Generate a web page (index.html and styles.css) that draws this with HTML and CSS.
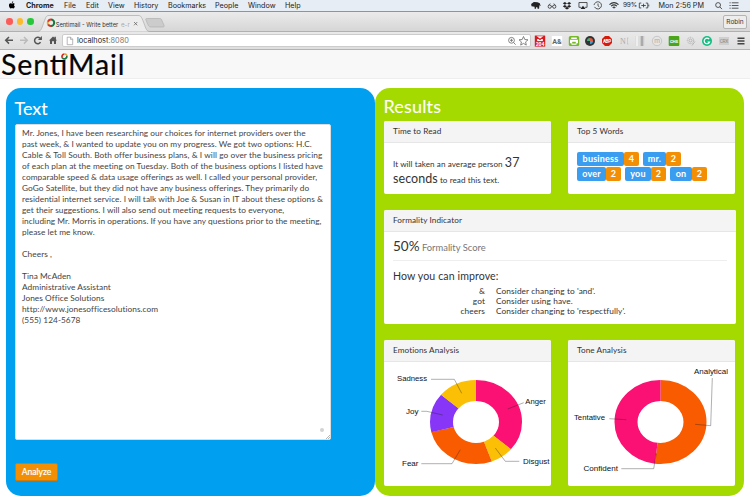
FILE: index.html
```
<!DOCTYPE html>
<html lang="en">
<head>
<meta charset="utf-8">
<title>Sentimail - Write better e-mails</title>
<link rel="stylesheet" href="styles.css">
</head>
<body>
<header class="menubar">
  <svg class="apple" viewBox="0 0 10 10"><path d="M7.600 5.200c0-1 .8-1.500.8-1.500C7.700 2.700 6.700 2.700 6.500 2.700c-.7 0-1.100.4-1.600.4S4 2.700 3.400 2.700C2 2.700 1.200 3.900 1.200 5.300c0 2 1.300 4 2.300 4 .6 0 .8-.4 1.500-.4s.9.4 1.500.4c1 0 1.900-2 2.100-2.500-.7-.3-1-.9-1-1.600zM6.500.3C5.500.5 4.800 1.300 4.900 2.400 5.900 2.300 6.600 1.400 6.500.3z"/></svg>
  <b>Chrome</b><span>File</span><span>Edit</span><span>View</span><span>History</span><span>Bookmarks</span><span>People</span><span>Window</span><span>Help</span>
  <div class="status">
    <svg viewBox="0 0 12 10"><path d="M.6 3.200l3-2 4 .2 2.600 1.200.9 2.700-.6.300-.6-1.400-.5 4.500H7.800L7.500 7H6v1.700H4.500L4.400 6.500 1 5.800z"/></svg>
    <svg viewBox="0 0 12 10" class="line"><circle cx="3.500" cy="6.300" r="1.800"/><circle cx="8.500" cy="6.300" r="1.800"/><path d="M2 5l2-2.200M10 5L8 2.800M5.300 6h1.400"/></svg>
    <svg viewBox="0 0 12 10"><path d="M3.700 1L1.300 2.600 3.600 4.300 6 2.700zM8.300 1l2.400 1.600-2.300 1.700L6 2.700zM1.300 5.800l2.400 1.600L6 5.800 3.600 4.400zM10.700 5.800L8.300 7.400 6 5.800l2.400-1.400zM3.700 8L6 6.400 8.300 8 6 9.500z"/></svg>
    <svg viewBox="0 0 12 10" class="line"><path d="M4 7H1.500V1.700h9V7H8"/><path class="solid" d="M6 5.400L8.800 9H3.200z"/></svg>
    <svg viewBox="0 0 12 10" class="line"><path d="M2.200 6.500A4 4 0 1 0 2.300 3L1.500 4.500M6 2.800V5.300L7.500 6.500"/></svg>
    <svg viewBox="0 0 12 10" class="line thick"><path d="M1 4Q6-.5 11 4M2.800 5.700Q6 2.800 9.200 5.700M4.500 7.400Q6 6 7.500 7.400"/><circle class="solid" cx="6" cy="8.500" r=".5"/></svg>
    <span>99%</span>
    <svg viewBox="0 0 12 10" class="line"><path d="M3 2.300H.8v5.400H3M8 2.300h2.200v5.400H8M11.300 4v2M3 5h5M5.500 3v4"/></svg>
    <span class="clock">Mon 2:56 PM</span>
    <svg viewBox="0 0 12 10" class="line"><circle cx="5" cy="4.500" r="2.700"/><path d="M7 6.600l2.300 2.400"/></svg>
    <svg viewBox="0 0 12 10" class="line"><path d="M3.500 2h7.500M3.500 5H11M3.500 8H11M1 2h1.300M1 5h1.300M1 8h1.300"/></svg>
  </div>
</header>
<div class="tabs">
  <i class="light red"></i><i class="light amber"></i><i class="light green"></i>
  <svg class="tabshape" viewBox="0 0 128 19">
    <path d="M0 18.500C3.500 18.300 4 14 6 9S8 2.500 11 2.500h89c3 0 3.500 1.500 5.500 6.500s2.500 9.300 6 9.500V19H0z" fill="#ececec" stroke="#aaa" stroke-width=".7"/>
    <path d="M109.500 5.500h12c2 0 2 1 3.500 4.500s2 4-1 4h-11c-2 0-2.500-1-4-4.500s-2-4 .5-4z" fill="#ccc" stroke="#aaa" stroke-width=".6"/>
    <g fill="none" stroke-width="2" transform="translate(.5 -.5)"><path d="M9.700 12.500A3.200 3.200 0 0 1 9.500 9.300" stroke="#e9a92c"/><path d="M9.500 9.300a3.200 3.200 0 0 1 3-2.200" stroke="#df3428"/><path d="M12.500 7.100a3.200 3.200 0 0 1 0 6.400" stroke="#187840"/><path d="M12.500 13.500a3.200 3.200 0 0 1-2.800-1.500" stroke="#c43427"/></g>
    <text x="17.700" y="13.500" textLength="62.500" lengthAdjust="spacingAndGlyphs">Sentimail - Write better</text><text x="83" y="13.500" fill="#aaa">e-r</text>
    <path d="M96 9l3.300 3.300M99.300 9L96 12.300" stroke="#666" stroke-width=".8"/>
  </svg>
  <span class="profile">Robin</span>
</div>
<div class="toolbar">
  <svg class="nav" viewBox="0 0 62 16"><g fill="none" stroke="#555" stroke-width="1.500"><path d="M13 7.300H6M9 4L5.700 7.300 9 10.600"/><path d="M20 7.300h7M24 4l3.300 3.300L24 10.600" stroke="#bbb"/><path d="M40.500 9.200A3.200 3.200 0 1 1 40 5.200"/></g><path d="M41.900 3v4h-4zM49 7.400L53 3.500l1.500 1.300V3.800h1.400v2.500L57 7.400h-1V11h-2V8.300h-2V11h-2V7.400z" fill="#555"/></svg>
  <div class="address">
    <svg class="page" viewBox="0 0 8 10"><path d="M1.200 1.200h3.500l2 2v5.500H1.200zM4.500 1.200v2.200h2.200" fill="none" stroke="#999" stroke-width=".7"/></svg>
    <span class="url">localhost<em>:8080</em></span>
    <svg class="marks" viewBox="0 0 24 12"><g fill="none" stroke="#777" stroke-width=".9"><circle cx="5.500" cy="5.300" r="2.900"/><path d="M4 5.300h3M5.500 3.800v3M7.600 7.500l2 2.200M17.500 1.500l1.300 3 3.200.3-2.400 2.100.7 3.200-2.800-1.700-2.800 1.700.7-3.200L13 4.800l3.200-.3z"/></g></svg>
  </div>
  <div class="extensions">
    <svg viewBox="0 0 12 12"><path d="M.8.6h10.400v11H.8z" fill="#d71920"/><path d="M2 1.300h8v4.800H2z" fill="#fff"/><path d="M2.500 6V1.800L6 4.500l3.500-2.700V6" fill="none" stroke="#d71920" stroke-width="1.300"/><text x="1.700" y="11.200" font-size="5.200" font-weight="700" fill="#fff" textLength="8.800">204</text></svg>
    <svg viewBox="0 0 12 12"><path d="M.8 1h10.400v10H.8z" fill="#fff"/><text x="1.300" y="8.500" font-size="7" font-weight="700" fill="#666" textLength="9.500" lengthAdjust="spacingAndGlyphs">A&amp;</text></svg>
    <svg viewBox="0 0 12 12"><rect x=".8" y="1" width="10.400" height="10" rx="1.500" fill="#77b829"/><path d="M3.200 2.500h5.600V4H3.200zM2 4.700h8v3.600H8.500v1.500h-5V8.300H2z" fill="#fff"/><path d="M4.200 6.800h3.600v1.800H4.200z" fill="#77b829"/></svg>
    <svg viewBox="0 0 12 12"><circle cx="6" cy="6" r="5" fill="#333"/><path d="M6 6V3a3 3 0 0 1 3 3z" fill="#e35b44"/><path d="M6 6h3a3 3 0 0 1-3 3z" fill="#3d9fd8"/><path d="M6 3v3H3a3 3 0 0 1 3-3z" fill="#37b478"/></svg>
    <svg viewBox="0 0 12 12"><path d="M4 1h4l3 3v4l-3 3H4L1 8V4z" fill="#d61b09"/><text x="1.900" y="7.700" font-size="4.600" font-weight="700" fill="#fff" textLength="8.200">ABP</text></svg>
    <svg viewBox="0 0 12 12"><text x="2" y="9" font-size="8" class="serif" fill="#aaa">N</text><path d="M9 3h1.500M9 9h1.500M9.500 3v6" stroke="#bbb" stroke-width=".6"/></svg>
    <svg viewBox="0 0 12 12"><path d="M1 1h10v10H1z" fill="#ddd"/><path d="M3 1v10" stroke="#fff"/><path d="M8 1v10" stroke="#aaa" stroke-width="2.700"/></svg>
    <svg viewBox="0 0 12 12"><circle cx="6" cy="6" r="4.700" fill="#e5e5e5" stroke="#c6c6c6"/><text x="3.200" y="8" font-size="6.500" fill="#aaa">m</text></svg>
    <svg viewBox="0 0 12 12"><rect x=".7" y="1" width="10.600" height="10" rx="1" fill="#4da619"/><text x="1.900" y="7.700" font-size="4.400" font-weight="700" fill="#fff" textLength="8.200">CHS</text></svg>
    <svg viewBox="0 0 12 12"><g fill="none" stroke="#b5b5b5"><circle cx="5.500" cy="5.500" r="3.200" stroke-dasharray="1.500 .8"/><circle cx="5.500" cy="5.500" r="1.500"/><path d="M7 10.500L10 6.500"/></g></svg>
    <svg viewBox="0 0 12 12"><circle cx="6" cy="6" r="5" fill="#15bd82"/><path d="M8.200 4.200A2.800 2.800 0 1 0 8.600 7H6.500" fill="none" stroke="#fff" stroke-width="1.200"/></svg>
    <svg viewBox="0 0 12 12"><rect x="1" y="2" width="10" height="8" fill="#cfcfcf"/><text x="1.700" y="7.800" font-size="4.800" fill="#888" textLength="8.500">CRX</text></svg>
    <svg viewBox="0 0 12 12"><path d="M2.500 3.200h7M2.500 6h7M2.500 8.800h7" stroke="#444" stroke-width="1.500"/></svg>
  </div>
</div>
<nav class="brandbar">
  <svg class="brand" viewBox="0 0 130 28"><text x="1" y="24.500" textLength="123.500">SentiMail</text><circle cx="64" cy="5" r="4.500" fill="#f8f8f8"/><g fill="none" stroke-width="1.700" transform="translate(0 .5)"><path d="M62.400 7.500a2.600 2.600 0 0 1 2-4" stroke="#d6281f"/><path d="M64.400 3.400a2.600 2.600 0 0 1 2.500 2" stroke="#e8a036"/><path d="M66.900 5.400a2.600 2.600 0 0 1-4.500 2.100" stroke="#187840"/></g></svg>
</nav>
<main>
  <section class="panel text-panel">
    <h1>Text</h1>
    <div class="message"><div class="lines"><p>Mr. Jones, I have been researching our choices for internet providers over the</p><p>past week, &amp; I wanted to update you on my progress. We got two options: H.C.</p><p class="loose">Cable &amp; Toll South. Both offer business plans, &amp; I will go over the business pricing</p><p class="loose">of each plan at the meeting on Tuesday. Both of the business options I listed have</p><p>comparable speed &amp; data usage offerings as well. I called your personal provider,</p><p>GoGo Satellite, but they did not have any business offerings. They primarily do</p><p>residential internet service. I will talk with Joe &amp; Susan in IT about these options &amp;</p><p>get their suggestions. I will also send out meeting requests to everyone,</p><p>including Mr. Morris in operations. If you have any questions prior to the meeting,</p><p>please let me know.</p><p></p><p>Cheers ,</p><p></p><p>Tina McAden</p><p>Administrative Assistant</p><p>Jones Office Solutions</p><p>http://www.jonesofficesolutions.com</p><p>(555) 124-5678</p></div>
      <i class="dot"></i>
      <svg class="grip" viewBox="0 0 5 5"><path d="M1 5l4-4M3 5l2-2" stroke="#888" stroke-width=".6"/></svg>
    </div>
    <button>Analyze</button>
  </section>
  <section class="panel results">
    <h1>Results</h1>
    <div class="cards">
      <article class="card"><h2>Time to Read</h2><div class="read">It will taken an average person <big>37<br>seconds</big> to read this text.</div></article>
      <article class="card"><h2>Top 5 Words</h2><div class="words">
        <div><span class="word w1">business</span><span class="count">4</span><span class="word w2">mr.</span><span class="count">2</span></div>
        <div><span class="word w3">over</span><span class="count">2</span><span class="word w4">you</span><span class="count">2</span><span class="word w5">on</span><span class="count">2</span></div>
      </div></article>
      <article class="card wide"><h2>Formality Indicator</h2><div class="formality">
        <div class="score"><big>50%</big> Formality Score</div>
        <h3>How you can improve:</h3>
        <dl><dt>&amp;</dt><dd>Consider changing to 'and'.</dd><dt>got</dt><dd>Consider using have.</dd><dt>cheers</dt><dd>Consider changing to 'respectfully'.</dd></dl>
      </div></article>
      <article class="card"><h2>Emotions Analysis</h2>
        <svg class="chart" viewBox="0 0 167 123">
          <g transform="translate(92 60) scale(1 .913) rotate(-90)" fill="none" stroke-width="23">
            <circle r="34.500" pathLength="100" stroke="#fa1173" stroke-dasharray="36.300 63.700"/>
            <circle r="34.500" pathLength="100" stroke="#fbbf05" stroke-dasharray="8.200 91.800" stroke-dashoffset="-36.200"/>
            <circle r="34.500" pathLength="100" stroke="#f95b00" stroke-dasharray="26.800 73.200" stroke-dashoffset="-44.400"/>
            <circle r="34.500" pathLength="100" stroke="#8735f7" stroke-dasharray="15.200 84.800" stroke-dashoffset="-71.100"/>
            <circle r="34.500" pathLength="100" stroke="#fbbf05" stroke-dasharray="13.800 86.200" stroke-dashoffset="-86.200"/>
          </g>
          <path class="leader" d="M47 17.300H70.300L77.700 31.300M123.700 47L139.700 40.700M37.300 49.300H42.700L58.700 53M37.300 101.700H68L76.300 87.700M111.300 86L121.300 99.300H135.300"/>
          <g class="labels"><text x="13" y="19" textLength="30" lengthAdjust="spacingAndGlyphs">Sadness</text><text x="141.300" y="41.700" textLength="20.500" lengthAdjust="spacingAndGlyphs">Anger</text><text x="22" y="52" textLength="12.500" lengthAdjust="spacingAndGlyphs">Joy</text><text x="18" y="104.300" textLength="16.500" lengthAdjust="spacingAndGlyphs">Fear</text><text x="139" y="101.700" textLength="26.500" lengthAdjust="spacingAndGlyphs">Disgust</text></g>
        </svg></article>
      <article class="card"><h2>Tone Analysis</h2>
        <svg class="chart" viewBox="0 0 167 123">
          <g transform="translate(92.500 60) scale(1 .913) rotate(-90)" fill="none" stroke-width="23">
            <circle r="34.500" pathLength="100" stroke="#f95b00" stroke-dasharray="52 48"/>
            <circle r="34.500" pathLength="100" stroke="#fa1173" stroke-dasharray="48 52" stroke-dashoffset="-52"/>
          </g>
          <path class="leader" d="M144.300 16L142.700 63.700 127 62.300M41.300 56.700L58.300 57.700M53.300 106.700H85.700L88.300 91.300"/>
          <g class="labels"><text x="126" y="12" textLength="34" lengthAdjust="spacingAndGlyphs">Analytical</text><text x="6" y="58.300" textLength="31" lengthAdjust="spacingAndGlyphs">Tentative</text><text x="15.500" y="108.700" textLength="34.500" lengthAdjust="spacingAndGlyphs">Confident</text></g>
        </svg></article>
    </div>
  </section>
</main>
</body>
</html>
```
FILE: styles.css
```
* { box-sizing: border-box; }
body { margin: 0; width: 750px; height: 500px; overflow: hidden; background: #fff; color: #333; font-family: Lato, sans-serif; }
svg { display: block; }
p, h1, h2, h3, dl, dd { margin: 0; font-weight: 400; }

.menubar { height: 12px; display: grid; grid-template-columns: 26px 38px 22px 22px 26px 34px 47px 33px 37px 1fr auto; background: #e7edf4; border-bottom: 1px solid #8b959f; font: 7.200px/11px Inter, sans-serif; color: #222; white-space: nowrap; }
.apple { width: 8px; height: 8px; margin: 1px 0 0 8px; }
.status { display: flex; align-items: center; width: 220px; height: 11px; }
.status svg { width: 12px; height: 9px; margin-right: 3.500px; flex: none; fill: #222; }
.status .line { fill: none; stroke: #333; stroke-width: .9; }
.status .thick { stroke-width: 1.300; }
.status .solid { fill: #222; stroke: none; }
.status span { width: 14px; margin-right: 1px; font-size: 6.500px; letter-spacing: -.2px; }
.status .clock { width: 46px; margin: 0 8px 0 5px; font-size: 7.200px; letter-spacing: 0; }

.tabs { height: 20px; display: flex; align-items: center; padding: 0 3px 0 6px; background: linear-gradient(#ebebeb, #d6d6d6); border-bottom: 1px solid #b0b0b0; }
.light { width: 6.500px; height: 6.500px; border-radius: 50%; margin-right: 4px; }
.red { background: #fc5b57; }
.amber { background: #fbbb2c; }
.green { background: #27c73c; }
.tabshape { width: 128px; height: 19px; margin-top: 1px; font: 6.200px Inter, sans-serif; fill: #333; }
.profile { margin: 0 0 0 auto; width: 24px; height: 14px; border: 1px solid #b4b4b4; border-radius: 2px; background: #ededed; font: 6.500px/12px Inter, sans-serif; text-align: center; }

.toolbar { height: 18px; display: flex; align-items: center; background: linear-gradient(#e9e9e9, #dedede); border-bottom: 1px solid #b3b3b3; }
.nav { width: 62px; height: 16px; }
.address { width: 469px; height: 13px; display: flex; align-items: center; background: #fff; border: 1px solid #ccc; border-radius: 2px; }
.page { width: 8px; height: 10px; margin: 0 3px 0 3px; }
.url { font: 7.350px/12px Inter, sans-serif; color: #222; }
.url em { font-style: normal; color: #777; }
.marks { width: 24px; height: 12px; margin-left: auto; }
.extensions { flex: 1; padding-left: 1px; display: grid; grid-template-columns: repeat(13, 16.700px); justify-items: center; font-family: Roboto, sans-serif; }
.extensions svg { width: 12px; height: 12px; }
.serif { font-family: "Liberation Serif", serif; }

.brandbar { height: 29px; background: #f8f8f8; border-bottom: 1px solid #eee; }
.brand { width: 130px; height: 28px; font: 28.500px Lato, sans-serif; fill: #050505; overflow: visible; }
.brand text { stroke: #050505; stroke-width: .2; }

main { display: flex; padding: 9px 6px 0; }
.panel { width: 369px; height: 408px; border-radius: 15px; padding: 0 9px; }
.text-panel { background: #009ff0; }
.results { background: #a5da00; }
h1 { height: 36px; color: #fff; font-size: 18px; line-height: 41px; text-indent: -.5px; -webkit-text-stroke: .1px #fff; }
.results h1 { height: 33px; line-height: 37px; letter-spacing: .15px; }
.message { position: relative; width: 316px; height: 316px; padding: 3px 6px; background: #fff; border: 1px solid #ddd; border-radius: 2px; }
.lines { font-size: 8.300px; line-height: 11px; white-space: nowrap; color: #444; letter-spacing: .05px; }
.lines p { height: 11px; }
.lines .loose { letter-spacing: .075px; }
.dot { position: absolute; right: 6px; bottom: 7px; width: 4.500px; height: 4.500px; border-radius: 50%; background: #d3d3d3; }
.grip { position: absolute; right: 0; bottom: 0; width: 5px; height: 5px; }
button { display: block; width: 43px; height: 18px; margin: 22.500px 0 0; padding: 0; background: #f28f04; border: 1px solid #d17c0a; border-radius: 2px; color: #fff; font: 400 8.600px/16px Lato, sans-serif; -webkit-text-stroke: .2px #fff; }

.cards { display: grid; grid-template-columns: 167px 167px; grid-template-rows: 73px 114px 146px; gap: 16px 17px; }
.card { background: #fff; border-radius: 2px; overflow: hidden; }
.wide { grid-column: span 2; width: 352px; }
h2 { height: 22px; padding-left: 9px; background: #f4f4f4; border-bottom: 1px solid #e6e6e6; font-size: 8.200px; line-height: 20px; letter-spacing: .08px; }
.read { padding: 12.500px 0 0 9px; font-size: 8.150px; line-height: 15px; letter-spacing: .06px; white-space: nowrap; }
.read big { font-size: 12.500px; line-height: 14px; }
.words { padding: 9px 0 0 9px; display: grid; gap: 1px; }
.words div { display: flex; height: 14px; }
.words span { border-radius: 2px; color: #fff; font-weight: 700; font-size: 9px; letter-spacing: .2px; line-height: 13.500px; text-align: center; }
.word { background: #3b9df0; }
.count { width: 15px; margin-right: 4px; background: #f28f04; }
.w1 { width: 47px; }
.w2 { width: 23px; }
.w3 { width: 29px; }
.w4 { width: 26px; }
.w5 { width: 22px; }
.formality { padding: 5px 9px; }
.score { height: 24px; border-bottom: 1px solid #eee; color: #777; font-size: 9.400px; line-height: 18px; }
.score big { color: #333; font-size: 13.500px; }
h3 { margin-top: 8px; height: 17px; font-size: 10.600px; line-height: 14px; letter-spacing: .1px; }
dl { display: grid; grid-template-columns: 92px 1fr; column-gap: 11px; font-size: 8.300px; line-height: 10px; letter-spacing: .1px; }
dt { text-align: right; }
.chart { width: 167px; height: 123px; fill: #111; }
.labels { font: 7.800px "Liberation Sans", sans-serif; }
.leader { fill: none; stroke: #222; stroke-opacity: .6; stroke-width: .6; }
```
